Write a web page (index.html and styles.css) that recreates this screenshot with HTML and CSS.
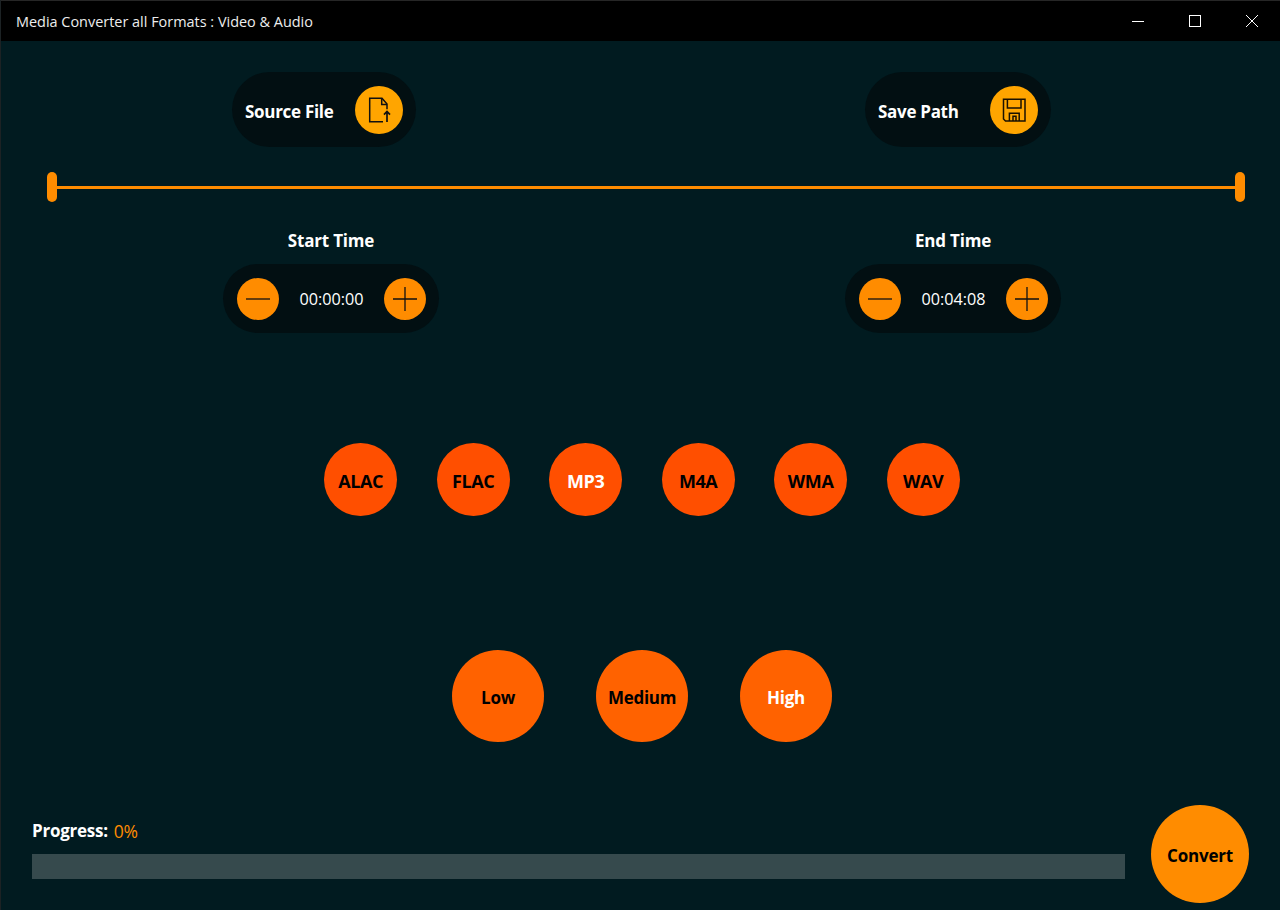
FILE: index.html
```html
<!DOCTYPE html>
<html lang="en">
<head>
<meta charset="utf-8">
<title>Media Converter all Formats : Video &amp; Audio</title>
<link rel="stylesheet" href="styles.css">
</head>
<body>
<div class="window">
  <header class="titlebar">
    <span class="title">Media Converter all Formats : Video &amp; Audio</span>
    <div class="controls">
      <svg class="ctl" width="12" height="12" viewBox="0 0 12 12"><path d="M0 6.5H12" stroke="#fff" fill="none"/></svg>
      <svg class="ctl" width="12" height="12" viewBox="0 0 12 12"><rect x="0.5" y="0.5" width="11" height="11" stroke="#fff" fill="none"/></svg>
      <svg class="ctl" width="12" height="12" viewBox="0 0 12 12"><path d="M0 0L12 12M12 0L0 12" stroke="#fff" fill="none"/></svg>
    </div>
  </header>
  <main class="content">
    <section class="file-row">
      <button class="pill pill-source">
        <span class="pill-label">Source File</span>
        <span class="pill-icon">
          <svg width="26" height="26" viewBox="0 0 26 26" fill="none" stroke="#111" stroke-width="1.5">
            <path d="M21 12.2V7L16 1.2H3.7V24.8H17"/>
            <path d="M15.7 1.2V7.4H21"/>
            <path d="M21 25V14.5M18 17.6L21 14.5L24 17.6" stroke-width="1.7"/>
          </svg>
        </span>
      </button>
      <button class="pill pill-save">
        <span class="pill-label">Save Path</span>
        <span class="pill-icon">
          <svg width="26" height="26" viewBox="0 0 26 26" fill="none" stroke="#1a1100" stroke-width="1.5">
            <path d="M2.5 2.2H24V24H4.5L2.5 22Z"/>
            <path d="M6.4 2.2V11H20V2.2"/>
            <path d="M8.4 24V16.3H18.2V24"/>
            <path d="M12 24V19.3H15V24"/>
          </svg>
        </span>
      </button>
    </section>

    <section class="slider">
      <span class="thumb"></span>
      <span class="track"></span>
      <span class="thumb"></span>
    </section>

    <section class="time-row">
      <div class="time-group time-start">
        <div class="time-label">Start Time</div>
        <div class="stepper">
          <span class="step"><svg width="26" height="26" viewBox="0 0 26 26"><path d="M1 13H25" stroke="#111" stroke-width="1.3"/></svg></span>
          <span class="time-value">00:00:00</span>
          <span class="step"><svg width="26" height="26" viewBox="0 0 26 26"><path d="M1 13H25M13 1V25" stroke="#111" stroke-width="1.3"/></svg></span>
        </div>
      </div>
      <div class="time-group time-end">
        <div class="time-label">End Time</div>
        <div class="stepper">
          <span class="step"><svg width="26" height="26" viewBox="0 0 26 26"><path d="M1 13H25" stroke="#111" stroke-width="1.3"/></svg></span>
          <span class="time-value">00:04:08</span>
          <span class="step"><svg width="26" height="26" viewBox="0 0 26 26"><path d="M1 13H25M13 1V25" stroke="#111" stroke-width="1.3"/></svg></span>
        </div>
      </div>
    </section>

    <section class="formats">
      <button class="fmt">ALAC</button>
      <button class="fmt">FLAC</button>
      <button class="fmt on">MP3</button>
      <button class="fmt">M4A</button>
      <button class="fmt">WMA</button>
      <button class="fmt">WAV</button>
    </section>

    <section class="quality">
      <button class="qual">Low</button>
      <button class="qual">Medium</button>
      <button class="qual on">High</button>
    </section>

    <section class="bottom">
      <div class="progress">
        <div class="progress-label"><b>Progress:</b><span class="pct">0%</span></div>
        <div class="bar"></div>
      </div>
      <button class="convert">Convert</button>
    </section>
  </main>
</div>
</body>
</html>
```
FILE: styles.css
```css
* { box-sizing: border-box; }
html, body { margin: 0; height: 100%; }
body {
  background: #011b20;
  font-family: "Open Sans", "Noto Sans", sans-serif;
  color: #fff;
  overflow: hidden;
}
button {
  border: 0;
  padding: 0;
  font-family: inherit;
  color: inherit;
}
.window {
  height: 910px;
  display: flex;
  flex-direction: column;
  border-left: 1px solid #1c2224;
}
.titlebar {
  height: 41px;
  flex: none;
  background: #000;
  border-top: 1px solid #262626;
  display: flex;
  align-items: center;
  justify-content: space-between;
  padding-left: 15px;
}
.title {
  font-size: 14.45px;
  color: #eee;
}
.controls {
  display: flex;
  gap: 45px;
  padding-right: 22px;
}
.ctl { display: block; }
.content {
  flex: 1;
  display: flex;
  flex-direction: column;
}
.file-row {
  display: flex;
  margin-top: 31px;
  height: 75px;
}
.pill {
  height: 75px;
  border-radius: 38px;
  background: #020f12;
  display: flex;
  align-items: center;
  justify-content: space-between;
  padding: 0 13px;
}
.pill-source { width: 184px; margin-left: 231px; }
.pill-save { width: 186px; margin-left: 449px; }
.pill-label {
  font-size: 17px;
  font-weight: 700;
  letter-spacing: -0.3px;
  padding-top: 4px;
}
.pill-icon {
  width: 48px;
  height: 48px;
  border-radius: 50%;
  background: #ffa500;
  display: flex;
  align-items: center;
  justify-content: center;
}
.slider {
  display: flex;
  align-items: center;
  height: 30px;
  margin: 25px 35px 0 46px;
}
.thumb {
  width: 10px;
  height: 30px;
  border-radius: 5px;
  background: #ff8c00;
  flex: none;
}
.track {
  flex: 1;
  height: 3px;
  background: #ff8c00;
}
.time-row {
  display: flex;
  margin-top: 28px;
}
.time-group {
  width: 216px;
  display: flex;
  flex-direction: column;
  align-items: center;
}
.time-start { margin-left: 222px; }
.time-end { margin-left: 406px; }
.time-label {
  font-size: 17px;
  font-weight: 700;
  letter-spacing: -0.2px;
  line-height: 22px;
}
.stepper {
  width: 216px;
  height: 69px;
  margin-top: 12px;
  border-radius: 35px;
  background: #020f12;
  display: flex;
  align-items: center;
  justify-content: space-between;
  padding: 0 13px 0 14px;
}
.step {
  width: 42px;
  height: 42px;
  border-radius: 50%;
  background: #ff8c00;
  display: flex;
  align-items: center;
  justify-content: center;
}
.time-value {
  font-weight: 400;
  font-size: 16.2px;
  padding-top: 1px;
}
.formats {
  display: flex;
  gap: 39.7px;
  margin-top: 110px;
  margin-left: 323.3px;
}
.fmt {
  width: 72.8px;
  height: 73px;
  padding-top: 2px;
  border-radius: 50%;
  background: #ff4f00;
  color: #000;
  font-size: 18px;
  font-weight: 700;
  letter-spacing: -0.4px;
}
.quality {
  display: flex;
  gap: 52px;
  margin-top: 134px;
  margin-left: 451px;
}
.qual {
  width: 92px;
  height: 92px;
  padding-top: 2px;
  border-radius: 50%;
  background: #ff6200;
  color: #000;
  font-size: 17px;
  font-weight: 700;
  letter-spacing: -0.3px;
}
.fmt.on, .qual.on { color: #fff; }
.bottom {
  display: flex;
  align-items: flex-start;
  margin-top: 63px;
  margin-left: 31px;
}
.progress {
  width: 1093px;
  padding-top: 14px;
}
.progress-label {
  display: flex;
  gap: 6px;
  font-size: 17px;
  line-height: 24px;
  letter-spacing: -0.25px;
}
.pct {
  color: #ff8c00;
  font-size: 17.5px;
}
.bar {
  height: 25px;
  margin-top: 11px;
  background: #364a4d;
}
.convert {
  width: 98px;
  height: 98px;
  padding-top: 2px;
  margin-left: 26px;
  border-radius: 50%;
  background: #ff8c00;
  color: #000;
  font-size: 17px;
  font-weight: 700;
  letter-spacing: -0.2px;
}
```
